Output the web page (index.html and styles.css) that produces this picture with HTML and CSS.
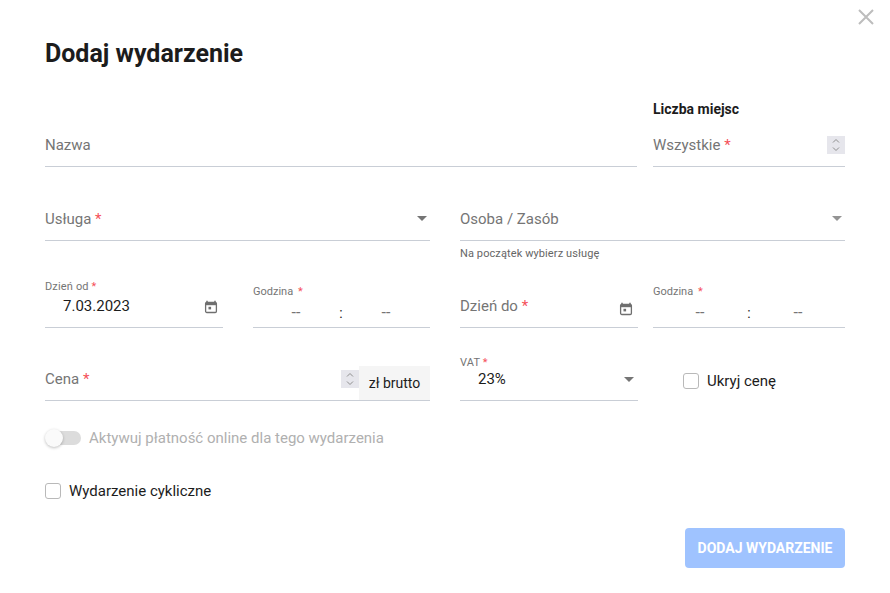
FILE: index.html
```html
<!DOCTYPE html>
<html lang="pl">
<head>
<meta charset="utf-8">
<title>Dodaj wydarzenie</title>
<link rel="stylesheet" href="styles.css">
</head>
<body>
<main class="modal">
  <button class="close" aria-label="Zamknij">
    <svg width="16" height="16" viewBox="0 0 16 16"><path d="M1 1l14 14M15 1L1 15" fill="none" stroke="#bdbdbd" stroke-width="2"/></svg>
  </button>
  <h1 class="title">Dodaj wydarzenie</h1>

  <div class="row row-name">
    <div class="col col-name">
      <div class="field"><span class="ph">Nazwa</span></div>
    </div>
    <div class="col col-seats">
      <div class="seats-head">Liczba miejsc</div>
      <div class="field">
        <span class="ph">Wszystkie <i class="req">*</i></span>
        <span class="spin">
          <svg width="18" height="18" viewBox="0 0 18 18"><path d="M6 6.500l3-3 3 3M6 11.500l3 3 3-3" fill="none" stroke="#8f8f8f" stroke-width="1"/></svg>
        </span>
      </div>
    </div>
  </div>

  <div class="row row-service">
    <div class="col half">
      <div class="field"><span class="ph">Usługa <i class="req">*</i></span><span class="caret"></span></div>
    </div>
    <div class="col half">
      <div class="field"><span class="ph">Osoba / Zasób</span><span class="caret caret-muted"></span></div>
      <div class="helper">Na początek wybierz usługę</div>
    </div>
  </div>

  <div class="row row-date">
    <div class="col half split">
      <div class="field field-date has-label">
        <div class="stack">
          <span class="mini">Dzień od <i class="req">*</i></span>
          <span class="value indent">7.03.2023</span>
        </div>
        <svg class="cal" width="14" height="14" viewBox="0 0 14 14"><path d="M3 .8v2M11 .8v2" stroke="#6f6f6f" stroke-width="1.500"/><rect x="1.600" y="2.300" width="10.800" height="10.200" rx="1.200" fill="none" stroke="#6f6f6f" stroke-width="1.300"/><path d="M1.600 3h10.800v2.200H1.600z" fill="#6f6f6f"/><rect x="4.500" y="6.800" width="2.600" height="2.600" fill="#6f6f6f"/></svg>
      </div>
      <div class="field field-time">
        <span class="mini mini-time">Godzina <i class="req req-gap">*</i></span>
        <div class="time"><span class="dash">--</span><span class="colon">:</span><span class="dash">--</span></div>
      </div>
    </div>
    <div class="col half split split-tight">
      <div class="field field-date">
        <span class="ph">Dzień do <i class="req">*</i></span>
        <svg class="cal" width="14" height="14" viewBox="0 0 14 14"><path d="M3 .8v2M11 .8v2" stroke="#6f6f6f" stroke-width="1.500"/><rect x="1.600" y="2.300" width="10.800" height="10.200" rx="1.200" fill="none" stroke="#6f6f6f" stroke-width="1.300"/><path d="M1.600 3h10.800v2.200H1.600z" fill="#6f6f6f"/><rect x="4.500" y="6.800" width="2.600" height="2.600" fill="#6f6f6f"/></svg>
      </div>
      <div class="field field-time field-time-wide">
        <span class="mini mini-time">Godzina <i class="req req-gap">*</i></span>
        <div class="time time-right"><span class="dash">--</span><span class="colon">:</span><span class="dash">--</span></div>
      </div>
    </div>
  </div>

  <div class="row row-price">
    <div class="col half">
      <div class="field field-price">
        <span class="ph">Cena <i class="req">*</i></span>
        <span class="price-end">
          <span class="spin spin-price">
            <svg width="18" height="18" viewBox="0 0 18 18"><path d="M6 6.500l3-3 3 3M6 11.500l3 3 3-3" fill="none" stroke="#8f8f8f" stroke-width="1"/></svg>
          </span>
          <span class="unit">zł brutto</span>
        </span>
      </div>
    </div>
    <div class="col half split">
      <div class="field field-date field-vat">
        <div class="stack stack-vat">
          <span class="mini">VAT <i class="req">*</i></span>
          <span class="value indent">23%</span>
        </div>
        <span class="caret caret-vat"></span>
      </div>
      <label class="check check-hide"><span class="box"></span>Ukryj cenę</label>
    </div>
  </div>

  <div class="toggle-row">
    <span class="toggle"><span class="track"></span><span class="thumb"></span></span>
    <span class="toggle-label">Aktywuj płatność online dla tego wydarzenia</span>
  </div>

  <label class="check check-cyclic"><span class="box"></span>Wydarzenie cykliczne</label>

  <div class="actions"><button class="submit">DODAJ WYDARZENIE</button></div>
</main>
</body>
</html>
```
FILE: styles.css
```css
* { box-sizing: border-box; }
html, body { margin: 0; height: 100%; background: #fff; }
body { font-family: Roboto, "Liberation Sans", sans-serif; color: #1c1c1c; overflow: hidden; }
.modal { position: relative; width: 890px; height: 593px; padding: 38px 45px 0; }
.close { position: absolute; top: 9px; right: 16px; width: 16px; height: 16px; padding: 0; border: 0; background: none; display: flex; }
.title { margin: 0; font-size: 25px; line-height: 32px; font-weight: 700; color: #1c1c1c; }
.row { display: flex; gap: 30px; }
.row-name { gap: 16px; height: 97px; align-items: flex-end; }
.col-name { flex: 0 0 592px; }
.col-seats { flex: 0 0 192px; }
.seats-head { font-size: 14px; font-weight: 700; line-height: 16px; margin-bottom: 2px; color: #1c1c1c; }
.half { flex: 0 0 385px; }
.split { display: flex; gap: 30px; }
.split-tight { gap: 15px; }
.field { height: 48px; padding-top: 4px; border-bottom: 1px solid #c9ced6; display: flex; align-items: center; justify-content: space-between; }
.ph { font-size: 15px; color: #757575; }
.req { font-style: normal; color: #f5505a; }
.spin { width: 18px; height: 18px; background: #e6e6ec; display: flex; }
.caret { width: 0; height: 0; margin-right: 3px; border-left: 5.500px solid transparent; border-right: 5.500px solid transparent; border-top: 5px solid #757575; }
.caret-muted { border-top-color: #949494; }
.row-service { margin-top: 26px; height: 87px; }
.helper { font-size: 11px; line-height: 13px; margin-top: 6px; color: #666; letter-spacing: .1px; }
.field-date { flex: 0 0 178px; }
.field-time { flex: 0 0 177px; padding-top: 0; flex-direction: column; align-items: stretch; justify-content: flex-start; }
.field-time-wide { flex: 0 0 192px; }
.has-label { padding-top: 0; }
.stack { display: flex; flex-direction: column; align-self: flex-start; }
.mini { font-size: 11px; line-height: 13px; letter-spacing: .15px; color: #757575; }
.mini-time { margin-top: 5px; letter-spacing: 0; }
.req-gap { margin-left: 2px; }
.value { font-size: 15px; line-height: 22px; margin-top: 2px; color: #1c1c1c; }
.indent { padding-left: 18px; }
.cal { margin: 6px 5px 0 0; }
.time { display: flex; padding: 7px 0 0 38px; font-size: 14px; line-height: 16px; }
.time-right { padding-left: 42px; }
.dash { width: 10px; text-align: center; font-size: 16px; color: #757575; }
.colon { width: 4px; margin: 0 38px; text-align: center; color: #1c1c1c; }
.time-right .colon { margin: 0 42px; }
.row-price { margin-top: 25px; height: 48px; }
.field-price { padding-top: 0; align-items: stretch; }
.field-price .ph { align-self: center; padding-top: 4px; }
.price-end { display: flex; align-items: flex-start; padding-top: 13px; }
.spin-price { margin-top: 4px; }
.unit { background: #f5f5f5; height: 34px; width: 71px; font-size: 14px; line-height: 34px; text-align: center; color: #1c1c1c; }
.field-vat { padding-top: 0; }
.stack-vat { padding-top: 3px; }
.stack-vat .value { margin-top: -1px; }
.caret-vat { margin: 6px 4px 0 0; }
.check { display: flex; align-items: center; font-size: 15px; color: #1c1c1c; }
.box { width: 16px; height: 16px; border: 1px solid #b9b9b9; border-radius: 3px; margin-right: 8px; background: #fff; }
.check-hide { margin: 8px 0 0 15px; }
.toggle-row { display: flex; align-items: center; margin-top: 26px; height: 22px; }
.toggle { position: relative; width: 36px; height: 18px; margin-right: 8px; display: block; }
.track { position: absolute; left: 2px; top: 2px; width: 34px; height: 14px; border-radius: 7px; background: #dcdcdc; }
.thumb { position: absolute; left: 0; top: 0; width: 18px; height: 18px; border-radius: 50%; background: #fafafa; box-shadow: 0 1px 3px rgba(0,0,0,.25); }
.toggle-label { font-size: 15px; color: #b0b0b0; }
.check-cyclic { margin-top: 31px; height: 22px; }
.actions { display: flex; justify-content: flex-end; margin-top: 26px; width: 800px; }
.submit { width: 160px; height: 40px; border: 0; border-radius: 4px; background: #9fc3ff; color: #fff; font: 700 14px Roboto, sans-serif; }
```
